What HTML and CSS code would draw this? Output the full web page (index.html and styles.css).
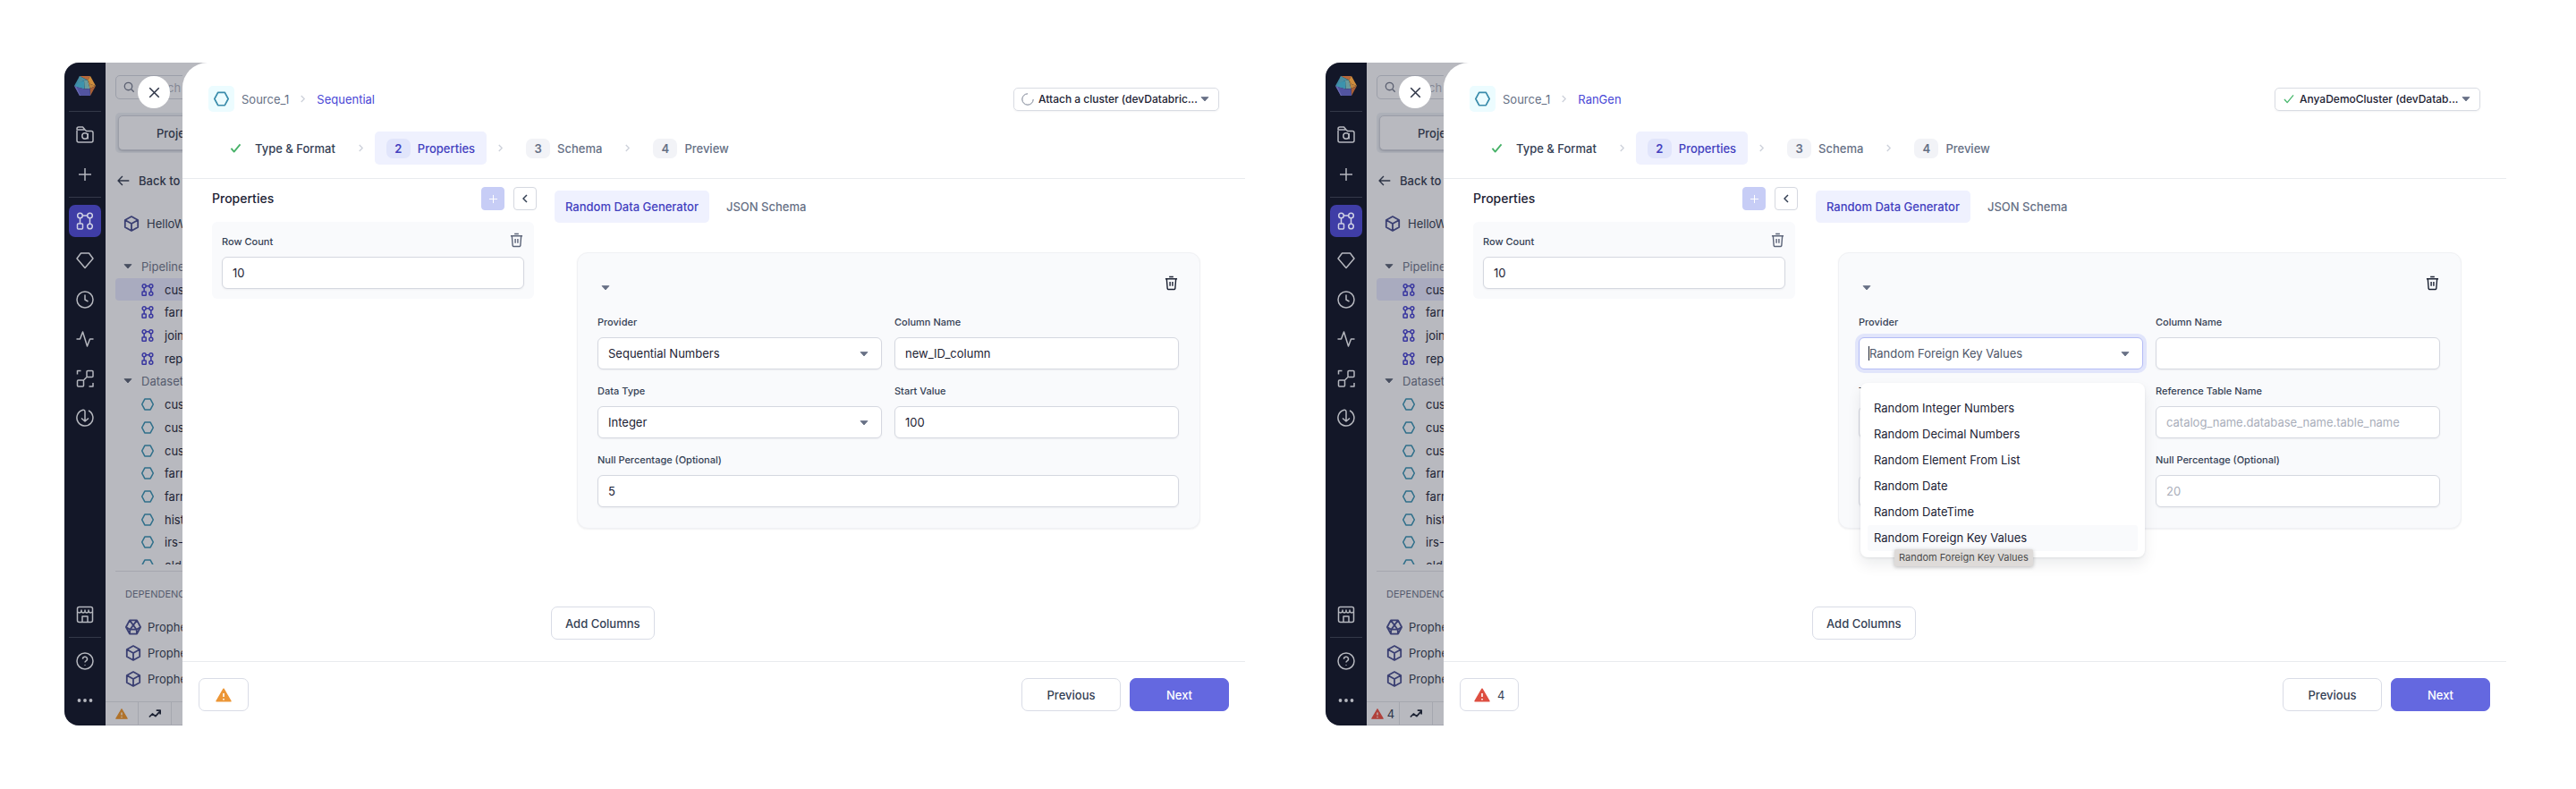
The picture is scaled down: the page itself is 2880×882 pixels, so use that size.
FILE: index.html
```html
<!DOCTYPE html>
<html lang="en">
<head>
<meta charset="utf-8">
<title>Random Data Generator</title>
<link rel="stylesheet" href="styles.css">
</head>
<body>
<svg class="defs" aria-hidden="true">
  <symbol id="logo" viewBox="0 0 24 22"><path d="M6 0 0 11l2.500 1L11 4z" fill="#3f89a3"/><path d="M6 0h12l-3 4.500z" fill="#b8683a"/><path d="M6 0 15 4.500 11 5 4 8z" fill="#4b8ea0"/><path d="M18 0 24 11l-6-2-3-4.500z" fill="#cf8d3d"/><path d="M15 4.500 18 9l6 2-6.500 3z" fill="#c0843f"/><path d="M24 11l-6 11-.5-8z" fill="#a85f35"/><path d="M11 5l4-.5 2.500 9.500-6 .5z" fill="#6b9a9c"/><path d="M11 5 4 8 1 12l10.500 2.500z" fill="#3c93ad"/><path d="M0 11l2.500 1 9 2.500 6-.5.5 8H6z" fill="#5254a0"/><path d="M0 11l2.500 1L7 22H6z" fill="#6a6ab0"/></symbol>
  <symbol id="folder" viewBox="0 0 20 20"><path d="M1 5v11a2 2 0 0 0 2 2h14a2 2 0 0 0 2-2V7.500a2 2 0 0 0-2-2h-5.500L10 4H1V3a2 2 0 0 1 2-2h4.500l2.500 3"/><circle cx="10" cy="11" r="3.200"/><path d="M13.200 8v6.500"/></symbol>
  <symbol id="plus" viewBox="0 0 20 20"><path d="M10 3v14M3 10h14"/></symbol>
  <symbol id="pipe" viewBox="0 0 20 20"><circle cx="4.500" cy="4" r="2.800"/><circle cx="15.500" cy="4" r="2.800"/><circle cx="15.500" cy="16" r="2.800"/><rect x="1.500" y="13" width="6" height="6" rx="1"/><path d="M7.300 4h5.400M4.500 7v6M15.500 7v6"/></symbol>
  <symbol id="gem" viewBox="0 0 20 20"><path d="M5.500 2h9L19 8 10 18.500 1 8z"/></symbol>
  <symbol id="clock" viewBox="0 0 20 20"><circle cx="10" cy="10" r="9"/><path d="M10 4.500V10l3.500 2"/></symbol>
  <symbol id="pulse" viewBox="0 0 20 20"><path d="M.5 10h4l3-8 5 16 3-8h4"/></symbol>
  <symbol id="nodes" viewBox="0 0 20 20"><rect x="12" y="1.500" width="7" height="7" rx="1"/><rect x="1.500" y="12" width="7" height="7" rx="1"/><path d="M12 8.500 8.500 12M1.500 5.500v-4h4M14.500 19H19v-4"/></symbol>
  <symbol id="down" viewBox="0 0 20 20"><path d="M10 14V3a2 2 0 0 0-3-1.500 9 9 0 1 0 7 .5M6 10.500l4 3.500 4-3.500"/></symbol>
  <symbol id="store" viewBox="0 0 20 20"><rect x="1.500" y="1.500" width="17" height="17" rx="2"/><path d="M1.500 7c2 1.500 3.500 1 4.500-.5 1 2 3 2 4 0 1 2 3 2 4 0 1 1.500 2.500 2 4.500.5M6 7V4.500M10 6.500v-2M14 6.500v-2M7 18v-6h6v6"/></symbol>
  <symbol id="help" viewBox="0 0 20 20"><circle cx="10" cy="10" r="9"/><path d="M7.500 7.800a2.500 2.500 0 1 1 3.600 2.100c-.8.400-1.100.8-1.100 1.600"/><path d="M10 14v.8"/></symbol>
  <symbol id="dots" viewBox="0 0 20 20"><g fill="currentColor" stroke="none"><circle cx="3.500" cy="10" r="1.900"/><circle cx="10" cy="10" r="1.900"/><circle cx="16.500" cy="10" r="1.900"/></g></symbol>
  <symbol id="search" viewBox="0 0 20 20"><circle cx="8.500" cy="8.500" r="6.500"/><path d="M13.500 13.500 18 18"/></symbol>
  <symbol id="close" viewBox="0 0 20 20"><path d="M3 3l14 14M17 3 3 17"/></symbol>
  <symbol id="back" viewBox="0 0 20 20"><path d="M19 10H1.500M8.500 3l-7 7 7 7"/></symbol>
  <symbol id="cube" viewBox="0 0 20 20"><path d="M10 1.200 18 5.500v9L10 18.800 2 14.500v-9zM2 5.500l8 4.500 8-4.500M10 10v8.800"/></symbol>
  <symbol id="prism" viewBox="0 0 20 20"><path d="M5.500 1.500h9L19 10l-4.500 8.500h-9L1 10zM5.500 1.500 14 13M14.500 1.500 6 13M6 13h8l.5 5.500M6 13l-.5 5.500M1 10l5 3M19 10l-5 3"/></symbol>
  <symbol id="hex" viewBox="0 0 20 20"><path d="M5.500 1.500h9L19 10l-4.500 8.500h-9L1 10z"/></symbol>
  <symbol id="caret" viewBox="0 0 10 6"><path d="M1 .600h8L5 5z" fill="currentColor" stroke="currentColor" stroke-width=".800" stroke-linejoin="round"/></symbol>
  <symbol id="chev" viewBox="0 0 8 12"><path d="M2 2l4 4-4 4"/></symbol>
  <symbol id="chevleft" viewBox="0 0 8 12"><path d="M6 2 2 6l4 4"/></symbol>
  <symbol id="check" viewBox="0 0 14 12"><path d="M1.500 6.500 5 10.500 12.500 1.500"/></symbol>
  <symbol id="trash" viewBox="0 0 16 18"><path d="M1 4h14M5.500 1.500h5M2.500 4l.8 10.500A2 2 0 0 0 5.300 16.500h5.400a2 2 0 0 0 2-2L13.500 4M6.500 7.500v5M9.500 7.500v5"/></symbol>
  <symbol id="warn" viewBox="0 0 18 16"><path d="M9 1.200 17 14.800H1z" fill="currentColor" stroke="currentColor" stroke-width="1.500" stroke-linejoin="round"/><path class="warn-mark" d="M9 6v4M9 12v1.600" stroke-width="1.600"/></symbol>
  <symbol id="trend" viewBox="0 0 16 12"><path d="M1 10l4-4 4 3 6-6.500M10 1.500h5v5"/></symbol>
  <symbol id="spin" viewBox="0 0 14 14"><path d="M7 .8A6.200 6.200 0 1 0 13.200 7"/></symbol>
</svg>

<main class="stage">
  <section class="window">
    <nav class="rail" aria-label="Main">
      <svg class="rail-logo"><use href="#logo"/></svg>
      <hr class="rail-line">
      <button class="rail-btn" aria-label="Browse"><svg><use href="#folder"/></svg></button>
      <button class="rail-btn" aria-label="Create"><svg><use href="#plus"/></svg></button>
      <hr class="rail-line">
      <button class="rail-btn rail-active" aria-label="Pipelines"><svg><use href="#pipe"/></svg></button>
      <button class="rail-btn" aria-label="Models"><svg><use href="#gem"/></svg></button>
      <button class="rail-btn" aria-label="History"><svg><use href="#clock"/></svg></button>
      <button class="rail-btn" aria-label="Monitoring"><svg><use href="#pulse"/></svg></button>
      <button class="rail-btn" aria-label="Lineage"><svg><use href="#nodes"/></svg></button>
      <button class="rail-btn" aria-label="Download"><svg><use href="#down"/></svg></button>
      <button class="rail-btn rail-end" aria-label="Package hub"><svg><use href="#store"/></svg></button>
      <hr class="rail-line">
      <button class="rail-btn" aria-label="Help"><svg><use href="#help"/></svg></button>
      <button class="rail-btn" aria-label="More"><svg><use href="#dots"/></svg></button>
    </nav>
    <aside class="side">
      <div class="search"><svg class="i13"><use href="#search"/></svg><span>Search</span></div>
      <div class="segment"><button class="segment-on">Project</button></div>
      <a class="back" href="#"><svg class="i14"><use href="#back"/></svg>Back to</a>
      <div class="project"><svg class="i18"><use href="#cube"/></svg>HelloWorld</div>
      <div class="tree">
        <ul class="tree-list">
          <li class="group"><svg class="caret"><use href="#caret"/></svg>Pipelines</li>
          <li class="leaf leaf-on"><svg class="pipe-ico"><use href="#pipe"/></svg>customers</li>
          <li class="leaf"><svg class="pipe-ico"><use href="#pipe"/></svg>farmers</li>
          <li class="leaf"><svg class="pipe-ico"><use href="#pipe"/></svg>join</li>
          <li class="leaf"><svg class="pipe-ico"><use href="#pipe"/></svg>report</li>
          <li class="group"><svg class="caret"><use href="#caret"/></svg>Datasets</li>
          <li class="leaf"><svg class="hex-ico"><use href="#hex"/></svg>customers</li>
          <li class="leaf"><svg class="hex-ico"><use href="#hex"/></svg>customers</li>
          <li class="leaf"><svg class="hex-ico"><use href="#hex"/></svg>customers</li>
          <li class="leaf"><svg class="hex-ico"><use href="#hex"/></svg>farmers</li>
          <li class="leaf"><svg class="hex-ico"><use href="#hex"/></svg>farmers</li>
          <li class="leaf"><svg class="hex-ico"><use href="#hex"/></svg>history</li>
          <li class="leaf"><svg class="hex-ico"><use href="#hex"/></svg>irs-data</li>
          <li class="leaf"><svg class="hex-ico"><use href="#hex"/></svg>old</li>
        </ul>
      </div>
      <div class="deps">
        <h2 class="deps-title">DEPENDENCIES</h2>
        <div class="dep"><svg class="i18"><use href="#prism"/></svg>Prophecy</div>
        <div class="dep"><svg class="i18"><use href="#cube"/></svg>Prophecy</div>
        <div class="dep"><svg class="i18"><use href="#cube"/></svg>Prophecy</div>
      </div>
      <div class="status">
        <span class="status-cell amber-dim"><svg class="i14"><use href="#warn"/></svg></span>
        <span class="status-cell"><svg class="i14"><use href="#trend"/></svg></span>
      </div>
    </aside>
    <div class="drawer">
      <header class="head">
        <div class="crumbs">
          <span class="tile"><svg class="i16"><use href="#hex"/></svg></span>
          <a class="crumb" href="#">Source_1</a>
          <svg class="chev"><use href="#chev"/></svg>
          <a class="crumb crumb-on" href="#">Sequential</a>
          <button class="cluster"><svg class="i14 spin"><use href="#spin"/></svg><span class="cluster-name">Attach a cluster (devDatabric...</span><svg class="caret"><use href="#caret"/></svg></button>
        </div>
        <nav class="steps" aria-label="Steps">
          <button class="step step-done"><span class="num-check"><svg><use href="#check"/></svg></span>Type &amp; Format</button>
          <svg class="chev"><use href="#chev"/></svg>
          <button class="step step-on"><span class="num">2</span>Properties</button>
          <svg class="chev"><use href="#chev"/></svg>
          <button class="step"><span class="num">3</span>Schema</button>
          <svg class="chev"><use href="#chev"/></svg>
          <button class="step"><span class="num">4</span>Preview</button>
        </nav>
      </header>
      <div class="body">
        <section class="props">
          <div class="props-head">
            <h1 class="props-title">Properties</h1>
            <button class="mini mini-add" aria-label="Add property"><svg><use href="#plus"/></svg></button>
            <button class="mini" aria-label="Collapse"><svg class="mini-chev"><use href="#chevleft"/></svg></button>
          </div>
          <div class="card">
            <div class="card-head"><label for="rows-1">Row Count</label><button class="bare" aria-label="Delete row count"><svg class="trash"><use href="#trash"/></svg></button></div>
            <input class="input" id="rows-1" type="text" value="10">
          </div>
        </section>
        <section class="main">
          <div class="tabs"><button class="tab tab-on">Random Data Generator</button><button class="tab">JSON Schema</button></div>
          <div class="gen">
            <div class="gen-head"><button class="bare toggle" aria-label="Toggle"><svg class="caret"><use href="#caret"/></svg></button><button class="bare dark" aria-label="Delete column"><svg class="trash"><use href="#trash"/></svg></button></div>
            <div class="grid">
              <div class="field"><label for="prov-1">Provider</label><div class="pick"><select class="input" id="prov-1"><option>Sequential Numbers</option></select><svg class="caret"><use href="#caret"/></svg></div></div>
              <div class="field"><label for="col-1">Column Name</label><input class="input" id="col-1" type="text" value="new_ID_column"></div>
              <div class="field"><label for="type-1">Data Type</label><div class="pick"><select class="input" id="type-1"><option>Integer</option></select><svg class="caret"><use href="#caret"/></svg></div></div>
              <div class="field"><label for="start-1">Start Value</label><input class="input" id="start-1" type="text" value="100"></div>
              <div class="field wide"><label for="null-1">Null Percentage (Optional)</label><input class="input" id="null-1" type="text" value="5"></div>
            </div>
          </div>
          <button class="btn add">Add Columns</button>
        </section>
      </div>
      <footer class="foot">
        <button class="btn issues amber" aria-label="Warnings"><svg class="i18"><use href="#warn"/></svg></button>
        <button class="btn nav-btn">Previous</button>
        <button class="btn nav-btn primary">Next</button>
      </footer>
    </div>
    <button class="close" aria-label="Close"><svg><use href="#close"/></svg></button>
  </section>

  <section class="window">
    <nav class="rail" aria-label="Main">
      <svg class="rail-logo"><use href="#logo"/></svg>
      <hr class="rail-line">
      <button class="rail-btn" aria-label="Browse"><svg><use href="#folder"/></svg></button>
      <button class="rail-btn" aria-label="Create"><svg><use href="#plus"/></svg></button>
      <hr class="rail-line">
      <button class="rail-btn rail-active" aria-label="Pipelines"><svg><use href="#pipe"/></svg></button>
      <button class="rail-btn" aria-label="Models"><svg><use href="#gem"/></svg></button>
      <button class="rail-btn" aria-label="History"><svg><use href="#clock"/></svg></button>
      <button class="rail-btn" aria-label="Monitoring"><svg><use href="#pulse"/></svg></button>
      <button class="rail-btn" aria-label="Lineage"><svg><use href="#nodes"/></svg></button>
      <button class="rail-btn" aria-label="Download"><svg><use href="#down"/></svg></button>
      <button class="rail-btn rail-end" aria-label="Package hub"><svg><use href="#store"/></svg></button>
      <hr class="rail-line">
      <button class="rail-btn" aria-label="Help"><svg><use href="#help"/></svg></button>
      <button class="rail-btn" aria-label="More"><svg><use href="#dots"/></svg></button>
    </nav>
    <aside class="side">
      <div class="search"><svg class="i13"><use href="#search"/></svg><span>Search</span></div>
      <div class="segment"><button class="segment-on">Project</button></div>
      <a class="back" href="#"><svg class="i14"><use href="#back"/></svg>Back to</a>
      <div class="project"><svg class="i18"><use href="#cube"/></svg>HelloWorld</div>
      <div class="tree">
        <ul class="tree-list">
          <li class="group"><svg class="caret"><use href="#caret"/></svg>Pipelines</li>
          <li class="leaf leaf-on"><svg class="pipe-ico"><use href="#pipe"/></svg>customers</li>
          <li class="leaf"><svg class="pipe-ico"><use href="#pipe"/></svg>farmers</li>
          <li class="leaf"><svg class="pipe-ico"><use href="#pipe"/></svg>join</li>
          <li class="leaf"><svg class="pipe-ico"><use href="#pipe"/></svg>report</li>
          <li class="group"><svg class="caret"><use href="#caret"/></svg>Datasets</li>
          <li class="leaf"><svg class="hex-ico"><use href="#hex"/></svg>customers</li>
          <li class="leaf"><svg class="hex-ico"><use href="#hex"/></svg>customers</li>
          <li class="leaf"><svg class="hex-ico"><use href="#hex"/></svg>customers</li>
          <li class="leaf"><svg class="hex-ico"><use href="#hex"/></svg>farmers</li>
          <li class="leaf"><svg class="hex-ico"><use href="#hex"/></svg>farmers</li>
          <li class="leaf"><svg class="hex-ico"><use href="#hex"/></svg>history</li>
          <li class="leaf"><svg class="hex-ico"><use href="#hex"/></svg>irs-data</li>
          <li class="leaf"><svg class="hex-ico"><use href="#hex"/></svg>old</li>
        </ul>
      </div>
      <div class="deps">
        <h2 class="deps-title">DEPENDENCIES</h2>
        <div class="dep"><svg class="i18"><use href="#prism"/></svg>Prophecy</div>
        <div class="dep"><svg class="i18"><use href="#cube"/></svg>Prophecy</div>
        <div class="dep"><svg class="i18"><use href="#cube"/></svg>Prophecy</div>
      </div>
      <div class="status">
        <span class="status-cell red-dim"><svg class="i14"><use href="#warn"/></svg><span class="count">4</span></span>
        <span class="status-cell"><svg class="i14"><use href="#trend"/></svg></span>
      </div>
    </aside>
    <div class="drawer">
      <header class="head">
        <div class="crumbs">
          <span class="tile"><svg class="i16"><use href="#hex"/></svg></span>
          <a class="crumb" href="#">Source_1</a>
          <svg class="chev"><use href="#chev"/></svg>
          <a class="crumb crumb-on" href="#">RanGen</a>
          <button class="cluster"><svg class="cluster-ok"><use href="#check"/></svg><span class="cluster-name">AnyaDemoCluster (devDatab...</span><svg class="caret"><use href="#caret"/></svg></button>
        </div>
        <nav class="steps" aria-label="Steps">
          <button class="step step-done"><span class="num-check"><svg><use href="#check"/></svg></span>Type &amp; Format</button>
          <svg class="chev"><use href="#chev"/></svg>
          <button class="step step-on"><span class="num">2</span>Properties</button>
          <svg class="chev"><use href="#chev"/></svg>
          <button class="step"><span class="num">3</span>Schema</button>
          <svg class="chev"><use href="#chev"/></svg>
          <button class="step"><span class="num">4</span>Preview</button>
        </nav>
      </header>
      <div class="body">
        <section class="props">
          <div class="props-head">
            <h1 class="props-title">Properties</h1>
            <button class="mini mini-add" aria-label="Add property"><svg><use href="#plus"/></svg></button>
            <button class="mini" aria-label="Collapse"><svg class="mini-chev"><use href="#chevleft"/></svg></button>
          </div>
          <div class="card">
            <div class="card-head"><label for="rows-2">Row Count</label><button class="bare" aria-label="Delete row count"><svg class="trash"><use href="#trash"/></svg></button></div>
            <input class="input" id="rows-2" type="text" value="10">
          </div>
        </section>
        <section class="main">
          <div class="tabs"><button class="tab tab-on">Random Data Generator</button><button class="tab">JSON Schema</button></div>
          <div class="gen">
            <div class="gen-head"><button class="bare toggle" aria-label="Toggle"><svg class="caret"><use href="#caret"/></svg></button><button class="bare dark" aria-label="Delete column"><svg class="trash"><use href="#trash"/></svg></button></div>
            <div class="grid">
              <div class="field"><label for="prov-2">Provider</label>
                <div class="pick pick-open"><input class="input" id="prov-2" type="text" role="combobox" aria-expanded="true" aria-controls="menu-2" value="Random Foreign Key Values"><svg class="caret"><use href="#caret"/></svg>
                  <ul class="menu" id="menu-2" role="listbox">
                    <li class="option" role="option">Random Integer Numbers</li>
                    <li class="option" role="option">Random Decimal Numbers</li>
                    <li class="option" role="option">Random Element From List</li>
                    <li class="option" role="option">Random Date</li>
                    <li class="option" role="option">Random DateTime</li>
                    <li class="option option-on" role="option" aria-selected="true">Random Foreign Key Values<span class="tip" role="tooltip">Random Foreign Key Values</span></li>
                  </ul>
                </div>
              </div>
              <div class="field"><label for="col-2">Column Name</label><input class="input" id="col-2" type="text"></div>
              <div class="field"><label for="type-2">Type</label><input class="input" id="type-2" type="text"></div>
              <div class="field"><label for="ref-2">Reference Table Name</label><input class="input" id="ref-2" type="text" placeholder="catalog_name.database_name.table_name"></div>
              <div class="field field-low"><input class="input" type="text" aria-label="Reference column"></div>
              <div class="field"><label for="null-2">Null Percentage (Optional)</label><input class="input" id="null-2" type="text" placeholder="20"></div>
            </div>
          </div>
          <button class="btn add">Add Columns</button>
        </section>
      </div>
      <footer class="foot">
        <button class="btn issues red"><svg class="i18"><use href="#warn"/></svg><span class="count">4</span></button>
        <button class="btn nav-btn">Previous</button>
        <button class="btn nav-btn primary">Next</button>
      </footer>
    </div>
    <button class="close" aria-label="Close"><svg><use href="#close"/></svg></button>
  </section>
</main>
</body>
</html>
```
FILE: styles.css
```css
* { box-sizing: border-box; }

body {
  margin: 0;
  background: #fff;
  color: #1c2233;
  font-family: Inter, "Liberation Sans", sans-serif;
  font-size: 13px;
  line-height: 18px;
}

button, input, select { font: inherit; color: inherit; }
button { padding: 0; border: 0; background: none; cursor: pointer; }
a { color: inherit; text-decoration: none; }
h1, h2, ul { margin: 0; padding: 0; font: inherit; list-style: none; }
svg { flex: none; fill: none; stroke: currentColor; stroke-width: 1.5; stroke-linejoin: round; }
.defs { display: none; }
.warn-mark { stroke: var(--mark, #fff); }

.i13 { width: 13px; height: 13px; stroke-width: 2; }
.i14 { width: 14px; height: 14px; stroke-width: 2; }
.i16 { width: 17px; height: 17px; stroke-width: 2; }
.i18 { width: 18px; height: 18px; }
.caret { width: 10px; height: 6px; color: #677085; stroke: none; }

.stage {
  display: grid;
  grid-template-columns: 1fr 1fr;
  gap: 90px;
  min-height: 100vh;
  padding: 70px 78px 71px 72px;
}

.window {
  position: relative;
  display: grid;
  grid-template-columns: 46px 86px minmax(0, 1fr);
  background: #b8b9bf;
  border-radius: 16px 0 0 16px;
  overflow: hidden;
}

/* Icon rail */
.rail {
  display: flex;
  flex-direction: column;
  align-items: center;
  gap: 8px;
  padding: 15px 5px 10px;
  background: #131728;
  color: #b5b7be;
}
.rail-logo { width: 24px; height: 22px; margin-bottom: 10px; stroke: none; }
.rail-line { width: 36px; height: 1px; margin: -1px 0 0; border: 0; background: #343949; }
.rail-btn { display: grid; place-items: center; width: 36px; height: 36px; border-radius: 7px; }
.rail-btn svg { width: 20px; height: 20px; }
.rail-active { background: #3f3da6; color: #cfd0e4; }
.rail-end { margin-top: auto; }

/* Project browser behind the drawer */
.side {
  display: flex;
  flex-direction: column;
  min-width: 0;
  overflow: hidden;
  padding: 14px 0 0 11px;
  white-space: nowrap;
  color: #1c2233;
}
.search {
  display: flex;
  flex: none;
  align-items: center;
  gap: 8px;
  width: 200px;
  height: 27px;
  padding-left: 8px;
  border: 1px solid #9c9fa9;
  border-radius: 5px;
  color: #5b6071;
}
.search span { color: #858894; }
.segment { flex: none; width: 200px; margin-top: 15px; padding: 3px; border-radius: 5px; background: #adb0b8; }
.segment-on {
  display: block;
  width: 100%;
  height: 39px;
  padding-left: 42px;
  text-align: left;
  font-weight: 500;
  color: #2d3446;
  background: #b8b9bf;
  border: 1px solid #9b9ea8;
  border-radius: 5px;
  box-shadow: 0 1px 2px #8f929c;
}
.back { display: flex; align-items: center; gap: 10px; margin-top: 22px; padding-left: 2px; font-weight: 500; color: #2d3446; }
.project { display: flex; align-items: center; gap: 8px; margin-top: 30px; padding-left: 9px; color: #2d3446; }
.project svg, .dep svg { color: #3a3f72; stroke-width: 2; }
.tree { flex: 1 1 0; min-height: 300px; margin-top: 26px; overflow: hidden; }
.tree-list { display: grid; grid-auto-rows: 1fr; height: 360px; }
.group { display: flex; align-items: center; gap: 10px; padding-left: 9px; color: #565c6e; }
.group .caret { color: #474e60; }
.leaf { display: flex; align-items: center; gap: 12px; padding-left: 29px; border-radius: 4px 0 0 4px; }
.leaf svg { width: 14px; height: 14px; stroke-width: 2.200; }
.leaf-on { background: #a9abbf; }
.pipe-ico { color: #3a38a0; }
.hex-ico { color: #2f6f8a; }
.deps { flex: none; margin-top: 7px; padding-left: 11px; border-top: 1px solid #a5a7af; }
.deps-title { margin: 16px 0 13px; font-size: 11px; color: #565c6e; }
.dep { display: flex; align-items: center; gap: 7px; height: 29px; color: #2d3446; }
.status { display: flex; flex: none; height: 27px; margin: 11px 0 0 -11px; border-top: 1px solid #a5a7af; border-bottom: 1px solid #a5a7af; }
.deps + .status { margin-left: -11px; }
.status-cell { --mark: #c3c0c0; display: flex; align-items: center; justify-content: center; gap: 4px; width: 37px; border-right: 1px solid #a5a7af; }
.status-cell .count { color: #2d3446; }
.amber-dim { color: #b0722a; }
.red-dim { color: #b0403a; }

.close {
  position: absolute;
  left: 82px;
  top: 15px;
  display: grid;
  place-items: center;
  width: 36px;
  height: 36px;
  border-radius: 50%;
  background: #fff;
  color: #2d3446;
}
.close svg { width: 15px; height: 15px; stroke-width: 2; }

/* Drawer */
.drawer { display: flex; flex-direction: column; min-width: 0; background: #fff; border-top-left-radius: 28px; }
.head { padding: 26px 0 15px; border-bottom: 1px solid #e9ebee; }
.crumbs { display: flex; align-items: center; padding: 0 29px; }
.tile { display: grid; place-items: center; width: 29px; height: 29px; margin-right: 8px; border-radius: 5px; background: #ecfcff; color: #3a8cab; }
.crumb { color: #667085; }
.crumb-on { color: #4a48d6; }
.chev { width: 7px; height: 11px; margin: 0 12px; color: #cdd1da; }
.cluster {
  display: flex;
  align-items: center;
  gap: 5px;
  width: 230px;
  height: 26px;
  margin-left: auto;
  padding: 0 10px 0 8px;
  border: 1px solid #d9dce3;
  border-radius: 5px;
  font-size: 12px;
  font-weight: 500;
  white-space: nowrap;
  box-shadow: 0 1px 2px #1018280d;
}
.cluster-name { flex: 1; min-width: 0; text-align: left; }
.spin { color: #7a8293; stroke-width: 1; }
.cluster-ok { width: 14px; height: 11px; color: #4cb970; }
.steps { display: flex; align-items: center; margin-top: 22px; padding-left: 33px; }
.step { display: flex; align-items: center; gap: 8px; height: 37px; padding: 0 13px; border-radius: 5px; font-weight: 500; color: #667085; }
.step-done { color: #344054; }
.step-on { background: #eff1fe; color: #4340bf; }
.num, .num-check { display: grid; place-items: center; width: 27px; height: 22px; border-radius: 7px; }
.num { background: #f2f3f7; font-weight: 600; }
.step-on .num { background: #e1e5fb; }
.num-check svg { width: 13px; height: 11px; color: #47b268; stroke-width: 2; }

.body { display: flex; flex: 1; gap: 20px; padding: 9px 50px 24px 33px; }
.props { width: 363px; }
.props-head { display: flex; align-items: center; gap: 10px; padding-bottom: 13px; }
.props-title { margin-right: auto; font-size: 14px; font-weight: 500; }
.mini { display: grid; place-items: center; width: 26px; height: 26px; border: 1px solid #d5d8e0; border-radius: 4px; color: #344054; }
.mini-add { border-color: #c7cdf6; background: #c7cdf6; color: #fff; }
.mini-add svg { width: 13px; height: 13px; }
.mini-chev { width: 8px; height: 12px; }
.card { margin-right: 3px; padding: 11px; border-radius: 6px; background: #f9fafc; }
.card-head { display: flex; justify-content: space-between; align-items: flex-start; padding-bottom: 8px; }
.card-head label { padding-top: 2px; }
label { display: block; font-size: 11px; font-weight: 500; color: #344054; }
.bare { display: grid; place-items: center; width: 18px; height: 18px; color: #5d6579; }
.dark { color: #1c2233; }
.trash { width: 15px; height: 17px; }
.input {
  display: block;
  width: 100%;
  height: 36px;
  padding: 0 11px;
  border: 1px solid #d5d8e0;
  border-radius: 6px;
  outline: 0;
  background: #fff;
  box-shadow: 0 1px 2px #1018280d;
  appearance: none;
}
.input::placeholder { color: #a9aeba; opacity: 1; }

.main { flex: 1; min-width: 0; display: flex; flex-direction: column; align-items: flex-start; }
.tabs { display: flex; gap: 7px; padding-top: 4px; }
.tab { height: 36px; padding: 0 12px; border-radius: 5px; font-weight: 500; color: #667085; }
.tab-on { background: #eff1fe; color: #4340bf; }
.gen { align-self: stretch; margin: 33px 0 0 25px; padding: 24px 23px 23px 22px; border: 1px solid #f0f1f4; border-radius: 12px; background: #f9fafc; box-shadow: 0 1px 2px #1018280f; }
.gen-head { display: flex; justify-content: space-between; align-items: flex-start; height: 24px; margin-bottom: 20px; }
.toggle { align-self: flex-end; }
.grid { display: grid; grid-template-columns: 1fr 1fr; gap: 15px 14px; }
.field label { padding-bottom: 8px; }
.field-low { align-self: end; }
.wide { grid-column: 1 / -1; }
.field .input { margin: 0; }
.pick { position: relative; }
.pick > .caret { position: absolute; right: 15px; top: 16px; }
.pick-open > .input { border-color: #b3bbf5; color: #4d5567; box-shadow: 0 0 0 4px #e1e5fb; }
.pick-open::before { content: ""; position: absolute; left: 11px; top: 10px; width: 1px; height: 16px; background: #1c2233; }
.menu {
  position: absolute;
  z-index: 2;
  left: 2px;
  top: 51px;
  width: 100%;
  padding: 14px 8px 7px;
  border-radius: 8px;
  background: #fff;
  box-shadow: 0 8px 16px #10182814, 0 1px 3px #10182814;
}
.option { position: relative; height: 29px; padding: 0 7px; border-radius: 3px; line-height: 29px; }
.option-on { background: #f9fafc; }
.tip {
  position: absolute;
  left: 30px;
  top: 27px;
  padding: 0 5px;
  border-radius: 2px;
  background: #dedbd9;
  color: #4b4b4b;
  font-size: 11px;
  line-height: 19px;
  white-space: nowrap;
  box-shadow: 0 1px 4px #00000040;
}
.btn {
  display: flex;
  align-items: center;
  justify-content: center;
  height: 37px;
  border: 1px solid #d9dce6;
  border-radius: 7px;
  background: #fff;
  font-weight: 500;
  color: #344054;
}
.add { margin: auto 0 0 -4px; padding: 0 15px; }
.foot { display: flex; gap: 10px; padding: 18px 18px 16px; border-top: 1px solid #e9ebee; }
.issues { gap: 8px; margin-right: auto; padding: 0 18px; }
.issues.red { padding: 0 15px; }
.issues .count { color: #344054; font-weight: 400; }
.amber { color: #ec9636; }
.red { color: #de4f41; }
.nav-btn { width: 111px; }
.primary { border-color: #6468e0; background: #6468e0; color: #fff; }
```
